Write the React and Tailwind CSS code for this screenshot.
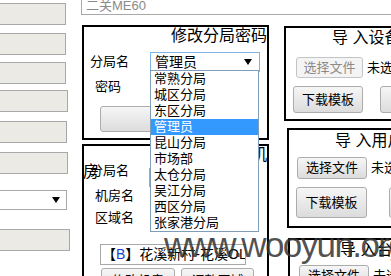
import React from "react";

const btn =
  "flex shrink-0 items-center justify-center rounded-[3px] border border-[#acacac] bg-linear-to-b from-[#f6f6f6] to-[#dcdcdc] text-[13px] text-black";
const btnOff =
  "flex shrink-0 items-center justify-center rounded-[3px] border border-[#c2c5c8] bg-[#f4f4f4] text-[13px] text-[#8a8a8a]";

const options = ["常熟分局", "城区分局", "东区分局", "管理员", "昆山分局", "市场部", "太仓分局", "吴江分局", "西区分局", "张家港分局"];

function Caret({ className }) {
  return (
    <svg width="8" height="6" viewBox="0 0 8 6" className={className}>
      <path d="M0 0h8L4 6z" fill="#000" />
    </svg>
  );
}

function LeftColumn() {
  const box = "h-[22px] border border-[#a8a8a8] bg-[#ebeae4]";
  return (
    <div className="-ml-[4px] flex w-[85px] shrink-0 flex-col">
      <div className={`${box} mt-[3px] w-[70px]`} />
      <div className={`${box} mt-[8px] w-[70px]`} />
      <div className={`${box} mt-[7px] w-[70px]`} />
      <div className={`${box} mt-[6px] w-[72px]`} />
      <div className={`${box} mt-[9px] w-[71px]`} />
      <div className={`${box} mt-[9px] w-[72px]`} />
      <div className="mt-[16px] flex h-[20px] w-[71px] items-center justify-end border border-[#a8a8a8] bg-white pr-[6px]">
        <Caret />
      </div>
      <div className={`${box} mt-[19px] w-[74px]`} />
    </div>
  );
}

function PasswordPanel() {
  return (
    <div className="ml-[1px] h-[115px] w-[187px] border-2 border-black">
      <div className="text-right text-[16px] leading-[18px]">修改分局密码</div>
      <div className="mt-[7px] flex items-center">
        <span className="ml-[6px] w-[60px] text-[13px] leading-[16px]">分局名</span>
        <div className="flex h-[20px] w-[110px] items-center justify-between border border-[#7eb4ea] bg-white pl-[4px] pr-[7px] text-[14px]">
          管理员
          <Caret />
        </div>
      </div>
      <div className="mt-[5px] flex h-[20px] items-center">
        <span className="ml-[11px] w-[55px] text-[13px] leading-[16px]">密码</span>
        <div className="h-[20px] w-[108px] border border-[#a8a8a8]" />
      </div>
      <button className={`${btn} ml-[16px] mt-[9px] h-[26px] w-[140px]`}>修改</button>
    </div>
  );
}

function RoomPanel() {
  return (
    <div className="ml-[1px] mt-[4px] h-[160px] w-[187px] border-2 border-black">
      <div className="h-[17px] text-right text-[16px] leading-[17px]">添加或修改机</div>
      <div className="h-0 -ml-[1px] text-[16px] leading-[17px]">房</div>
      <div className="flex items-start">
        <span className="ml-[6px] w-[59px] text-[13px] leading-[16px]">分局名</span>
        <div className="mt-[5px] h-[19px] w-[105px] border border-[#a8a8a8]" />
      </div>
      <div className="flex h-[18px] items-center">
        <span className="ml-[11px] w-[54px] text-[13px] leading-[16px]">机房名</span>
      </div>
      <div className="mt-[4px] flex h-[18px] items-center">
        <span className="ml-[11px] w-[54px] text-[13px] leading-[16px]">区域名</span>
      </div>
      <div className="ml-[16px] mt-[17px] flex h-[21px] w-[146px] items-center border border-[#a8a8a8] pl-[1px] text-[14px] whitespace-nowrap overflow-hidden">
        【<span className="text-[#1a3fd0]">B</span>】花溪新村-花溪OLT
      </div>
      <div className="ml-[17px] mt-[3px] flex gap-[6px]">
        <button className={`${btn} h-[26px] w-[74px]`}>修改机房</button>
        <button className={`${btn} h-[26px] w-[73px]`}>调整区域</button>
      </div>
    </div>
  );
}

function ImportPanel({ title, className, titlePad, children }) {
  return (
    <div className={`w-[200px] border-2 border-black ${className}`}>
      <div className={`text-[16px] leading-[20px] whitespace-nowrap ${titlePad}`}>{title}</div>
      {children}
    </div>
  );
}

export default function App() {
  return (
    <div className="relative h-[276px] w-[391px] overflow-hidden bg-white font-['Liberation_Sans','Noto_Sans_CJK_SC',sans-serif] text-black">
      <div className="flex">
        <LeftColumn />
        <div className="flex-1">
          <div className="-mt-[9px] flex h-[24px] w-[330px] items-end border border-[#a8a8a8] pl-[4px] text-[13px] leading-[16px] text-[#8a8a8a]">
            二关ME60
          </div>
          <div className="mt-[10px] flex">
            <div className="w-[188px] shrink-0">
              <PasswordPanel />
              <RoomPanel />
            </div>
            <div className="ml-[15px] flex flex-col">
              <ImportPanel title="导 入设备信息" className="mt-[1px] h-[95px]" titlePad="pl-[46px]">
                <div className="mt-[9px] flex items-center">
                  <button className={`${btnOff} ml-[10px] h-[21px] w-[67px]`}>选择文件</button>
                  <span className="ml-[4px] text-[13px] whitespace-nowrap">未选择任何文件</span>
                </div>
                <div className="mt-[8px] flex">
                  <button className={`${btn} ml-[7px] h-[27px] w-[70px]`}>下载模板</button>
                  <button className={`${btn} ml-[17px] h-[27px] w-[70px]`}>上传</button>
                </div>
              </ImportPanel>
              <ImportPanel title="导 入用户信息" className="ml-[3px] mt-[7px] h-[100px]" titlePad="pl-[46px] pt-[1px]">
                <div className="mt-[6px] flex items-center">
                  <button className={`${btn} ml-[8px] h-[22px] w-[70px]`}>选择文件</button>
                  <span className="ml-[4px] text-[13px] whitespace-nowrap">未选择任何文件</span>
                </div>
                <div className="mt-[8px] flex">
                  <button className={`${btn} ml-[7px] h-[31px] w-[71px]`}>下载模板</button>
                  <button className={`${btn} ml-[22px] h-[31px] w-[70px]`}>上传</button>
                </div>
              </ImportPanel>
              <ImportPanel title="导 入台账信息" className="ml-[4px] mt-[10px] h-[80px]" titlePad="pl-[50px]">
                <div className="mt-[5px] flex items-center">
                  <button className={`${btn} ml-[9px] h-[22px] w-[70px]`}>选择文件</button>
                  <span className="ml-[4px] text-[13px] whitespace-nowrap">未选择任何文件</span>
                </div>
              </ImportPanel>
            </div>
          </div>
        </div>
      </div>

      {/* open select list */}
      <div className="absolute left-[150px] top-[70px] w-[109px] border border-[#7f9db9] bg-white">
        {options.map((o) => (
          <div
            key={o}
            className={`h-[16px] pl-[3px] text-[13px] leading-[16px] whitespace-nowrap ${
              o === "管理员" ? "bg-[#3399ff] text-white" : "text-black"
            }`}
          >
            {o}
          </div>
        ))}
      </div>

      {/* watermark */}
      <div className="pointer-events-none absolute left-[164px] top-[225px] font-['Liberation_Sans',sans-serif] text-[35px] leading-[40px] tracking-[-1.6px] text-[#333]/85">
        www.wooyun.org
      </div>
    </div>
  );
}
